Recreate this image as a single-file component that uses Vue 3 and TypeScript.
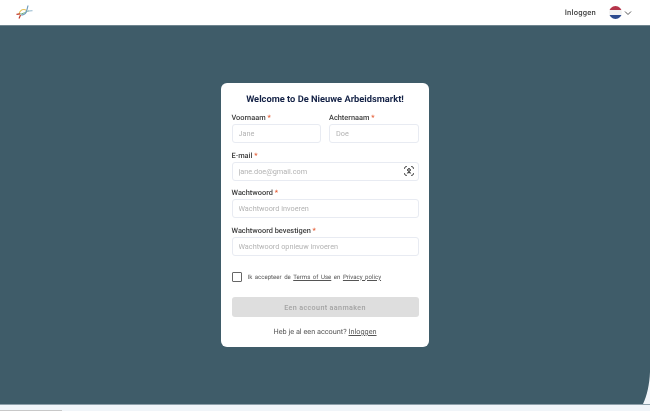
<script setup lang="ts">
const agreeLabel = 'Ik accepteer de'
</script>

<template>
  <div class="page">
    <header class="topbar">
      <svg class="logo" width="17" height="16" viewBox="0 0 17 16" fill="none">
        <path d="M4 9 C6 9 8 8 10 7 C11.5 6.2 12 6 13 6" stroke="#6fae7c" stroke-width="1" />
        <path d="M3 9.5 C3.5 6.5 5.5 4.5 8 4.5 C9 4.5 9.5 4.8 10 5.2" stroke="#e6c25a" stroke-width="1.2" />
        <path d="M.5 9.3 L4 8.8" stroke="#c0392b" stroke-width="1.3" />
        <path d="M3 13.5 L4.5 10" stroke="#c0392b" stroke-width="1.2" />
        <path d="M12 .5 C11.5 3 11 5 10 7.5 C9 9.5 7.5 10 5 10" stroke="#6f9cbc" stroke-width="1.2" />
        <path d="M11.5 6.2 L16.5 5.6" stroke="#a9c6d8" stroke-width="1.3" />
      </svg>
      <div class="topbar-right">
        <a class="login-link">Inloggen</a>
        <span class="flag"><i class="red"></i><i class="white"></i><i class="blue"></i></span>
        <svg class="chev" width="8" height="6" viewBox="0 0 8 6" fill="none">
          <path d="M1 1.5 L4 4.5 L7 1.5" stroke="#555" stroke-width="1" />
        </svg>
      </div>
    </header>

    <main class="main">
      <form class="card" @submit.prevent>
        <h1>Welcome to De Nieuwe Arbeidsmarkt!</h1>
        <div class="row">
          <div class="field">
            <label>Voornaam <b>*</b></label>
            <input placeholder="Jane" />
          </div>
          <div class="field">
            <label>Achternaam <b>*</b></label>
            <input placeholder="Doe" />
          </div>
        </div>
        <div class="field">
          <label>E-mail <b>*</b></label>
          <div class="with-icon">
            <input placeholder="jane.doe@gmail.com" />
            <svg class="scan" width="10" height="10" viewBox="0 0 11 11" fill="none" stroke="#222" stroke-width="1.1">
              <path d="M.6 3 C.6 1.4 1.4 .6 3 .6 M8 .6 C9.6 .6 10.4 1.4 10.4 3 M.6 8 C.6 9.6 1.4 10.4 3 10.4 M8 10.4 C9.6 10.4 10.4 9.6 10.4 8" />
              <circle cx="5.5" cy="4.4" r="1.5" />
              <path d="M3.2 8.3 C3.6 6.9 7.4 6.9 7.8 8.3" />
            </svg>
          </div>
        </div>
        <div class="field">
          <label>Wachtwoord <b>*</b></label>
          <input placeholder="Wachtwoord invoeren" />
        </div>
        <div class="field">
          <label>Wachtwoord bevestigen <b>*</b></label>
          <input placeholder="Wachtwoord opnieuw invoeren" />
        </div>
        <div class="agree">
          <span class="box"></span>
          <span class="agree-text">{{ agreeLabel }} <u>Terms of Use</u> en <u>Privacy policy</u></span>
        </div>
        <button class="submit" type="button" disabled>Een account aanmaken</button>
        <p class="have-account">Heb je al een account? <u>Inloggen</u></p>
      </form>
      <svg class="corner" width="8" height="32" viewBox="0 0 8 32">
        <path d="M8 0 C7.5 12 5 24 1 32 H8 Z" fill="#f1f5f9" />
      </svg>
    </main>

    <footer class="foot"><span class="foot-line"></span></footer>
  </div>
</template>

<style scoped>
/* the reference is a scaled-down capture, so everything is a touch soft */
.page { width: 650px; height: 411px; display: flex; flex-direction: column; overflow: hidden; background: #f1f5f9; font-family: Roboto, "Liberation Sans", sans-serif; text-rendering: geometricPrecision; filter: blur(.3px); }
.topbar { height: 25px; flex: none; box-sizing: border-box; display: flex; align-items: center; justify-content: space-between; padding: 0 18px 0 16px; background: #fff; }
.topbar-right { display: flex; align-items: center; }
.login-link { font-size: 7.6px; font-weight: 500; color: #444; letter-spacing: .22px; margin-right: 13px; }
.flag { width: 13px; height: 13px; border-radius: 50%; overflow: hidden; display: flex; flex-direction: column; }
.flag i { flex: 1; }
.flag .red { background: #b5344a; }
.flag .white { background: #f2f2f2; }
.flag .blue { background: #2c4a8e; }
.chev { margin-left: 2px; }
.main { flex: 1; position: relative; background: #3f5c69; border-top: 1px solid #6f858f; display: flex; align-items: flex-start; justify-content: center; padding-top: 57px; box-sizing: border-box; }
.card { width: 208px; height: 264px; box-sizing: border-box; background: #fff; border-radius: 6px; padding: 10px 10.5px; display: flex; flex-direction: column; }
h1 { margin: 0 0 6px; font-size: 9.3px; line-height: 13px; font-weight: 700; color: #152347; text-align: center; white-space: nowrap; }
.row { display: grid; grid-template-columns: 1fr 1fr; gap: 8px; }
.field { display: flex; flex-direction: column; margin-bottom: 6.5px; min-width: 0; flex: none; }
label { font-size: 7.4px; line-height: 11px; font-weight: 500; color: #3c3c3c; margin-bottom: 1px; }
label b { color: #e4572e; font-weight: 500; }
input { display: block; width: 100%; height: 19px; box-sizing: border-box; border: 1px solid #e8ebf2; border-radius: 3px; padding: 0 6px; font-family: inherit; font-size: 7.3px; outline: none; background: #fff; color: #333; }
input::placeholder { color: #b3b3b3; }
.with-icon { position: relative; }
.scan { position: absolute; right: 5px; top: 4.5px; }
.agree { display: flex; align-items: center; margin-top: 10px; }
.box { width: 10px; height: 10px; box-sizing: border-box; border: 1px solid #666; border-radius: 1px; margin-right: 6px; flex: none; }
.agree-text { font-size: 6.1px; color: #555; word-spacing: 1px; white-space: nowrap; }
.submit { margin-top: 15px; height: 20px; flex: none; border: 0; border-radius: 3px; background: #dedede; color: #a3a3a3; font-family: inherit; font-size: 7.2px; font-weight: 500; letter-spacing: .35px; padding: 0; }
.have-account { margin: 10px 0 0; text-align: center; font-size: 7.3px; line-height: 10px; color: #555; }
.corner { position: absolute; right: 0; bottom: 0; }
.foot { height: 7px; flex: none; position: relative; background: #f1f5f9; border-top: 1px solid #8ea0aa; box-sizing: border-box; }
.foot-line { position: absolute; left: 0; bottom: 0; width: 62px; height: 1px; background: #c8c8c8; }
</style>
